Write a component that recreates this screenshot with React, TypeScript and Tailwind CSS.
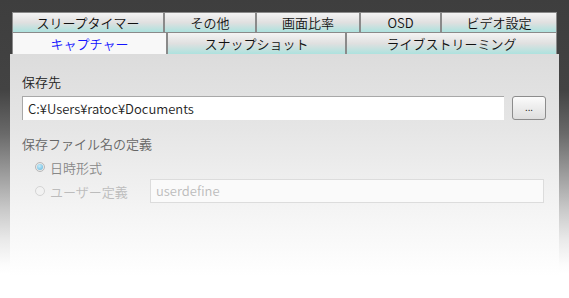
import React from 'react';

const font = { fontFamily: '"Noto Sans CJK JP", "Noto Sans", sans-serif' };

const topTabs = [
  { label: 'スリープタイマー', w: 'w-[152px]' },
  { label: 'その他', w: 'w-[92px]' },
  { label: '画面比率', w: 'w-[104px]' },
  { label: 'OSD', w: 'w-[81px]' },
  { label: 'ビデオ設定', w: 'w-[116px]' },
];

const bottomTabs = [
  { label: 'キャプチャー', w: 'w-[155px]', active: true },
  { label: 'スナップショット', w: 'w-[179px]', active: false },
  { label: 'ライブストリーミング', w: 'w-[211px]', active: false },
];

export default function App() {
  return (
    <div
      className="w-[569px] h-[298px] overflow-hidden pt-[12px] font-[350] bg-[linear-gradient(to_bottom,#3e3e3e_0%,#434343_30%,#6a6a6a_45%,#c8c8c8_70%,#ebebeb_81%,#fcfcfc_89%,#ffffff_92%)]"
      style={font}
    >
      <div className="ml-[12px] w-[545px]">
        <div className="flex h-[21px]">
          {topTabs.map((t) => (
            <div
              key={t.label}
              className={`${t.w} flex items-center justify-center border border-[#8a8a8a] text-[13px] leading-none text-[#111] bg-[linear-gradient(to_bottom,#f4f4f4_0%,#e0e0e0_50%,#ade2de_100%)]`}
            >
              {t.label}
            </div>
          ))}
        </div>
        <div className="flex h-[21px]">
          {bottomTabs.map((t) => (
            <div
              key={t.label}
              className={`${t.w} flex items-center justify-center border-x border-[#8a8a8a] text-[13px] leading-none ${
                t.active
                  ? 'bg-[#f8f8f8] text-[#1414ff]'
                  : 'text-[#111] bg-[linear-gradient(to_bottom,#f4f4f4_0%,#e0e0e0_50%,#ade2de_100%)]'
              }`}
            >
              {t.label}
            </div>
          ))}
        </div>
      </div>

      <div className="mx-[10px] h-[222px] px-[12px] pt-[20px] bg-[linear-gradient(to_bottom,#dcdcdc_0%,#e6e6e6_35%,#f4f4f4_70%,#ffffff_100%)]">
        <div className="text-[13px] leading-[16px] text-[#222]">保存先</div>
        <div className="mt-[6px] flex items-center">
          <div className="w-[482px] h-[24px] bg-white border-t border-l border-[#a8a8a8] flex items-center pl-[5px] text-[13px] text-[#222]">
            C:¥Users¥ratoc¥Documents
          </div>
          <button className="ml-[8px] w-[34px] h-[24px] rounded-[3px] border border-[#8c8c8c] bg-[linear-gradient(to_bottom,#fbfbfb_0%,#ececec_50%,#dedede_100%)] flex items-center justify-center text-[10px] leading-none text-[#333] pb-[3px]">
            ...
          </button>
        </div>

        <div className="mt-[16px] text-[13px] leading-[16px] text-[#666]">保存ファイル名の定義</div>

        <div className="mt-[7px] flex items-center h-[16px] pl-[13px]">
          <span className="w-[10px] h-[10px] rounded-full border border-[#b8b8b8] bg-[#e8e8e8] flex items-center justify-center">
            <span className="w-[6px] h-[6px] rounded-full bg-[radial-gradient(circle_at_40%_35%,#c8ecfa,#5ab4dc)]" />
          </span>
          <span className="ml-[5px] text-[13px] leading-none text-[#888]">日時形式</span>
        </div>

        <div className="mt-[4px] flex items-center h-[24px] pl-[13px]">
          <span className="w-[10px] h-[10px] rounded-full border border-[#d4d4d4] bg-[#f2f2f2]" />
          <span className="ml-[5px] w-[100px] text-[13px] leading-none text-[#bcbcbc]">ユーザー定義</span>
          <div className="w-[394px] h-[24px] bg-[#fafafa] border border-[#dcdcdc] flex items-center pl-[5px] text-[13px] text-[#bcbcbc]">
            userdefine
          </div>
        </div>
      </div>
    </div>
  );
}
